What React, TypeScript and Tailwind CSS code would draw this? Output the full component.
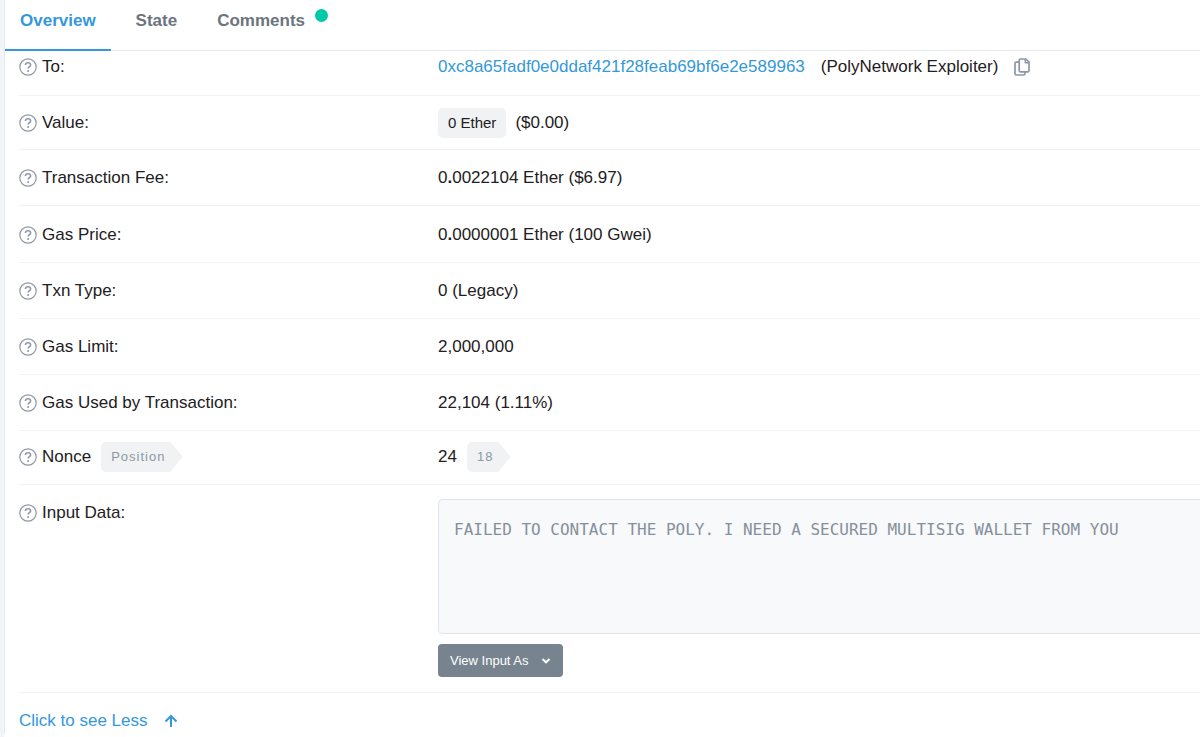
import type { ReactNode } from "react"

function HelpIcon() {
  return (
    <svg viewBox="0 0 18 18" className="size-[18px] shrink-0 text-[#8f98a6]" fill="none" stroke="currentColor" aria-hidden="true">
      <circle cx="9" cy="9" r="8.200" strokeWidth="1.200" />
      <path d="M6.400 7C6.500 5.600 7.500 4.800 9 4.800s2.600.8 2.600 2.100c0 1.700-2.500 1.800-2.500 3.700" strokeWidth="1.600" />
      <circle cx="9.100" cy="12.900" r="1" fill="currentColor" stroke="none" />
    </svg>
  )
}

function CopyIcon() {
  return (
    <svg viewBox="0 0 16 18" className="h-[18px] w-[16px]" fill="none" stroke="currentColor" strokeWidth="1.700" strokeLinejoin="round" aria-hidden="true">
      <path d="M5.200 4.200H2.200a1.200 1.200 0 0 0-1.200 1.200v10.400A1.200 1.200 0 0 0 2.200 17h7.600a1.200 1.200 0 0 0 1.200-1.200v-1.900" />
      <path d="M6.400 1h5.400L15 4.200v8.400a1.200 1.200 0 0 1-1.200 1.200H6.400a1.200 1.200 0 0 1-1.200-1.200V2.200A1.200 1.200 0 0 1 6.400 1z" />
      <path d="M11.200 1.200v3.600h3.600" strokeWidth="1.400" />
    </svg>
  )
}

type RowProps = {
  label: string
  badge?: ReactNode
  className?: string
  children: ReactNode
}

function Row({ label, badge, className = "py-[14px]", children }: RowProps) {
  return (
    <div className={`grid grid-cols-[419px_1fr] border-b border-[#eff2f7] leading-[27px] ${className}`}>
      <dt className="flex h-[27px] items-center gap-[5px]">
        <HelpIcon />
        <span>{label}</span>
        {badge}
      </dt>
      <dd className="min-w-0">{children}</dd>
    </div>
  )
}

function ArrowBadge({ children }: { children: ReactNode }) {
  return (
    <span className="ml-[5px] inline-flex items-stretch text-[13px] leading-[30px] tracking-[1px] text-[#8c98a4]">
      <span className="rounded-l-[5px] bg-[#f1f2f4] pl-[10px] pr-[4px]">{children}</span>
      <svg viewBox="0 0 14 30" className="h-[30px] w-[14px] fill-[#f1f2f4]" aria-hidden="true">
        <path d="M0 0h1L14 14.500 1 30H0z" />
      </svg>
    </span>
  )
}

const tab = "flex h-[51px] items-start px-[15px] pt-[9px] leading-6"

export default function App() {
  return (
    <div className="min-h-screen overflow-hidden border-l-4 border-[#f2f4f8] bg-white font-['Liberation_Sans',Arial,sans-serif] text-[17px] text-[#1e2022]">
      <div className="border-l border-[#e7eaf3]">
        <nav className="flex h-[51px] gap-[10px] border-b border-[#e7eaf3] font-bold text-[#6c757e]">
          <a href="#overview" className={`${tab} border-b-2 border-[#3498db] text-[#3498db]`}>
            Overview
          </a>
          <a href="#state" className={tab}>
            State
          </a>
          <a href="#comments" className={`${tab} gap-[10px]`}>
            Comments
            <span className="size-[13px] rounded-full bg-[#00c9a7]" />
          </a>
        </nav>

        <dl className="ml-[14px]">
          <Row label="To:" className="pt-[2px] pb-[15px]">
            <div className="flex items-center">
              <a href="#address" className="text-[#3498db]">
                0xc8a65fadf0e0ddaf421f28feab69bf6e2e589963
              </a>
              <span className="ml-[16px]">(PolyNetwork Exploiter)</span>
              <button type="button" aria-label="Copy address" className="ml-[16px] text-[#8c98a4]">
                <CopyIcon />
              </button>
            </div>
          </Row>
          <Row label="Value:" className="pt-[13px] pb-[13px]">
            <div className="flex h-[27px] items-center gap-[9px]">
              <span className="rounded-[5px] bg-[#f1f2f4] px-[10px] text-[15px] leading-[30px]">0 Ether</span>
              <span>($0.00)</span>
            </div>
          </Row>
          <Row label="Transaction Fee:">
            0<b>.</b>0022104 Ether ($6.97)
          </Row>
          <Row label="Gas Price:" className="pt-[15px] pb-[14px]">
            0<b>.</b>0000001 Ether (100 Gwei)
          </Row>
          <Row label="Txn Type:">0 (Legacy)</Row>
          <Row label="Gas Limit:">2,000,000</Row>
          <Row label="Gas Used by Transaction:">22,104 (1.11%)</Row>
          <Row label="Nonce" badge={<ArrowBadge>Position</ArrowBadge>} className="pt-[12px] pb-[14px]">
            <div className="flex h-[27px] items-center gap-[5px]">
              24
              <ArrowBadge>18</ArrowBadge>
            </div>
          </Row>
          <Row label="Input Data:" className="pt-[14px] pb-[15px]">
            <textarea
              readOnly
              aria-label="Input data"
              className="block h-[135px] w-full resize-none rounded-l-[5px] border border-r-0 border-[#dfe3ea] bg-[#f8f9fb] px-[15px] py-[16px] font-['DejaVu_Sans_Mono',monospace] text-[16px] leading-7 text-[#84909c] outline-none"
              defaultValue="FAILED TO CONTACT THE POLY. I NEED A SECURED MULTISIG WALLET FROM YOU"
            />
            <button
              type="button"
              className="mt-[10px] flex h-[33px] items-center gap-[12px] rounded-[4px] bg-[#77838f] px-[12px] text-[13px] text-white"
            >
              View Input As
              <svg viewBox="0 0 10 6" className="h-[6px] w-[10px]" fill="none" stroke="currentColor" strokeWidth="2" aria-hidden="true">
                <path d="M1.500 1 5 4.300 8.500 1" />
              </svg>
            </button>
          </Row>
        </dl>

        <a href="#less" className="ml-[14px] mt-[14px] flex items-center gap-[16px] leading-[27px] text-[#3498db]">
          Click to see Less
          <svg viewBox="0 0 14 14" className="size-[14px]" fill="none" stroke="currentColor" strokeWidth="2" aria-hidden="true">
            <path d="M7 13V2M1.500 7.500 7 2l5.500 5.500" />
          </svg>
        </a>
      </div>
    </div>
  )
}
